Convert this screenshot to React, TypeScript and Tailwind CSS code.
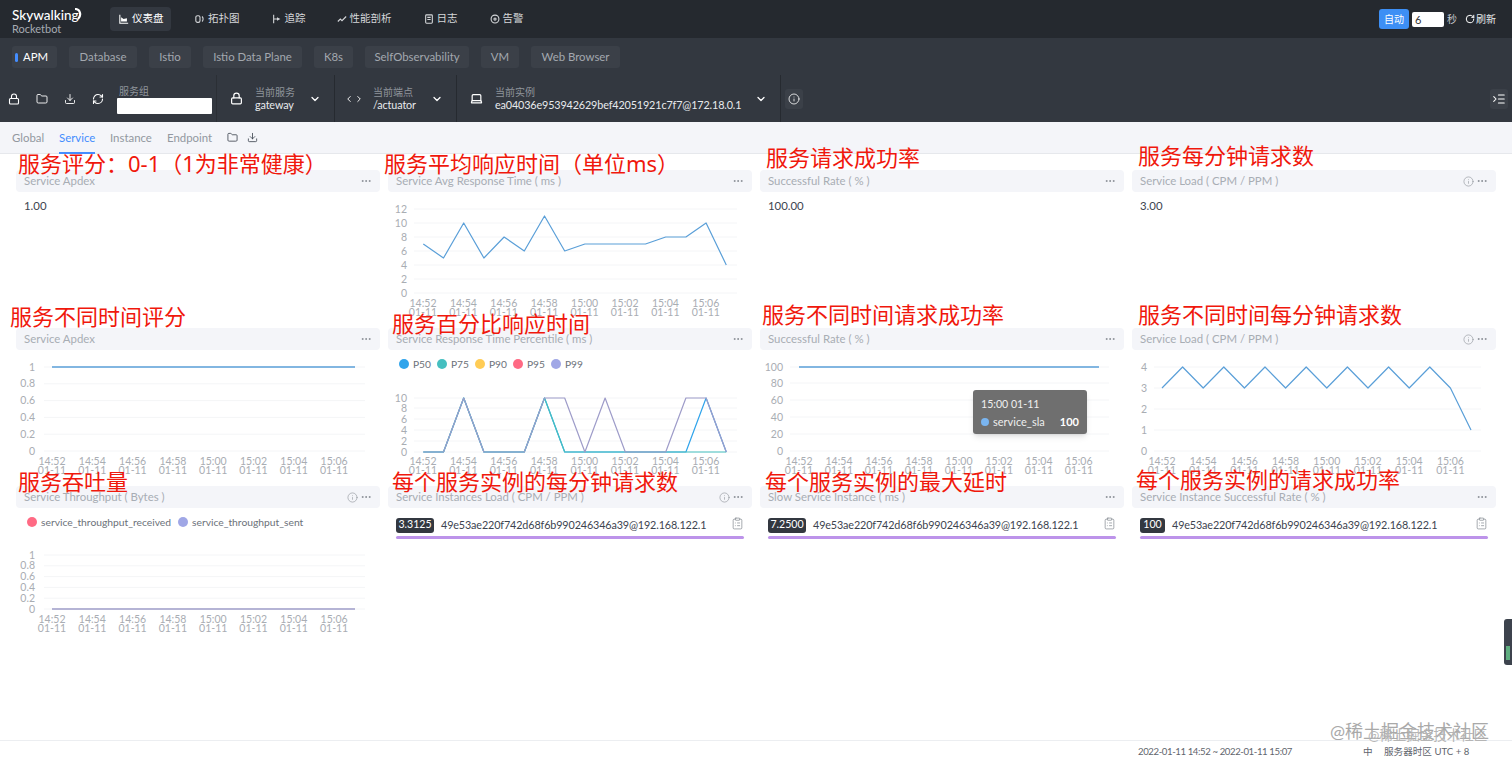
import React from "react";
import { Lock, Folder, Download, RefreshCw, ChevronDown, ChevronLeft, ChevronRight, Laptop, Info, Ellipsis, ClipboardList, IndentIncrease, RotateCw } from "lucide-react";

const BLUE = "#5a9fd8";
const TIMES = ["14:52", "14:54", "14:56", "14:58", "15:00", "15:02", "15:04", "15:06"];

type Series = { color: string; width?: number; pts: [number, number][] };
type ChartProps = {
  left: number; top: number; height?: number;
  yLabels: [string, number][];
  yRight: number; gridL: number; gridR: number;
  xStart: number; xStep: number; xY: number;
  series: Series[];
};

function Chart({ left, top, height = 128, yLabels, yRight, gridL, gridR, xStart, xStep, xY, series }: ChartProps) {
  return (
    <svg viewBox={`${left} ${top} 364 ${height}`} width={364} height={height} className="block">
      {yLabels.map(([t, y]) => (
        <g key={t}>
          <line x1={gridL} x2={gridR} y1={y} y2={y} stroke="#f4f5f7" />
          <text x={yRight} y={y + 3.5} fontSize={10.5} fill="#a9adb3" textAnchor="end">{t}</text>
        </g>
      ))}
      {TIMES.map((t, i) => (
        <g key={t} fontSize={10.5} fill="#a9adb3" textAnchor="middle">
          <text x={xStart + i * xStep} y={xY}>{t}</text>
          <text x={xStart + i * xStep} y={xY + 9}>01-11</text>
        </g>
      ))}
      {series.map((s, i) => (
        <polyline key={i} points={s.pts.map((p) => p.join(",")).join(" ")} fill="none" stroke={s.color} strokeWidth={s.width ?? 1.2} strokeLinejoin="round" />
      ))}
    </svg>
  );
}

function pts(x0: number, step: number, y0: number, unit: number, vals: number[]): [number, number][] {
  return vals.map((v, i) => [x0 + i * step, y0 - v * unit]);
}

function Card({ title, info, children }: { title: string; info?: boolean; children?: React.ReactNode }) {
  return (
    <div className="h-[150px] min-w-0">
      <div className="h-[22px] bg-[#f4f5f9] rounded-sm flex items-center pl-2 pr-2 text-[#a8adb4] text-[11.4px]">
        <span className="flex-1">{title}</span>
        {info && <Info size={11} strokeWidth={1.3} className="mr-[2px] text-[#8a8f96]" />}
        <Ellipsis size={12} className="text-[#8a8f96]" />
      </div>
      {children}
    </div>
  );
}

function Value({ v }: { v: string }) {
  return <div className="pl-2 pt-[6px] text-[11.4px] leading-[16px] text-[#3d444f]">{v}</div>;
}

function InstanceRow({ v, w }: { v: string; w: string }) {
  return (
    <div className="pl-2 pr-2 pt-[9px]">
      <div className="flex items-center h-[16px]">
        <span className={`${w} shrink-0 h-[15px] bg-[#333840] rounded-[3px] text-white text-[10.6px] flex items-center justify-center`}>{v}</span>
        <span className="flex-1 ml-[7px] text-[10.8px] tracking-[-0.13px] text-[#3d444f] whitespace-nowrap">49e53ae220f742d68f6b990246346a39@192.168.122.1</span>
        <ClipboardList size={13} strokeWidth={1.2} className="text-[#777d85] -mt-1 shrink-0" />
      </div>
      <div className="mt-[3px] h-[3px] rounded-sm bg-[#bd93ea]" />
    </div>
  );
}

function Sel({ icon, label, value, w }: { icon: React.ReactNode; label: string; value: string; w: string }) {
  return (
    <div className={`flex items-center h-[47px] ${w} border-r border-[#262a30] shrink-0`}>
      <div className="w-[38px] flex justify-center text-white">{icon}</div>
      <div className="flex-1 min-w-0 pt-[1px]">
        <div className="text-[10px] leading-[12px] text-[#8f949b]">{label}</div>
        <div className="text-[10.8px] tracking-[-0.13px] leading-[14px] text-[#e8eaed] whitespace-nowrap">{value}</div>
      </div>
      <ChevronDown size={12} strokeWidth={2.5} className="text-white mr-[13px]" />
    </div>
  );
}

function NavIcon({ kind }: { kind: number }) {
  const common = { width: 10, height: 10, viewBox: "0 0 12 12", fill: "none", stroke: "currentColor", strokeWidth: 1.3 };
  switch (kind) {
    case 0:
      return <svg {...common}><path d="M1 1v10h10" /><path d="M2.5 9V4l3 2 4-1v4z" fill="currentColor" stroke="none" /></svg>;
    case 1:
      return <svg {...common}><rect x="1" y="2" width="5" height="8" rx="2" /><path d="M8.5 3c1.6 1.6 1.6 4.4 0 6" /></svg>;
    case 2:
      return <svg {...common}><path d="M2 1v10M2 6h4" /><path d="M6 4l4 2-4 2z" fill="currentColor" stroke="none" /></svg>;
    case 3:
      return <svg {...common}><path d="M1 9l3-3 2 2 5-5" /></svg>;
    case 4:
      return <svg {...common}><rect x="2" y="1" width="8" height="10" rx="1" /><path d="M4 4h4M4 6.5h4" /></svg>;
    default:
      return <svg {...common}><circle cx="6" cy="6" r="4.7" /><circle cx="6" cy="6" r="1.3" /></svg>;
  }
}

const NAV: [string, string][] = [
  ["仪表盘", "w-[61px] pl-[9px]"],
  ["拓扑图", "ml-[24px]"],
  ["追踪", "ml-[32px]"],
  ["性能剖析", "ml-[31px]"],
  ["日志", "ml-[32px]"],
  ["告警", "ml-[32px]"],
];
const TABS: [string, string][] = [
  ["APM", "w-[45px] ml-3 mr-3"],
  ["Database", "w-[68px] mr-3"],
  ["Istio", "w-[42px] mr-3"],
  ["Istio Data Plane", "w-[99px] mr-3"],
  ["K8s", "w-[39px] mr-3"],
  ["SelfObservability", "w-[104px] mr-3"],
  ["VM", "w-[38px] mr-3"],
  ["Web Browser", "w-[89px]"],
];

const NOTES: [string, number, number][] = [
  ["服务评分：0-1（1为非常健康）", 18, 163],
  ["服务平均响应时间（单位ms）", 384, 163],
  ["服务请求成功率", 766, 157],
  ["服务每分钟请求数", 1138, 155],
  ["服务不同时间评分", 10, 316],
  ["服务百分比响应时间", 392, 323],
  ["服务不同时间请求成功率", 762, 314],
  ["服务不同时间每分钟请求数", 1138, 314],
  ["服务吞吐量", 18, 481],
  ["每个服务实例的每分钟请求数", 392, 481],
  ["每个服务实例的最大延时", 765, 481],
  ["每个服务实例的请求成功率", 1136, 479],
];

const yDec = (top: number, bottom: number): [string, number][] =>
  ["1", "0.8", "0.6", "0.4", "0.2", "0"].map((t, i) => [t, top + (i * (bottom - top)) / 5]);

export default function App() {
  return (
    <div className="relative h-[763px] w-[1512px] overflow-hidden flex flex-col bg-white font-['Lato','Noto_Sans_CJK_SC',sans-serif]">
      {/* top nav */}
      <div className="h-[38px] bg-[#25292f] flex items-center shrink-0">
        <div className="w-[110px] pl-3 pt-[5px] relative">
          <div className="text-[13.5px] leading-[14px] font-medium text-white">Skywalking</div>
          <div className="text-[11px] leading-[13px] text-[#a6abb2]">Rocketbot</div>
          <svg width="9" height="12" viewBox="0 0 9 12" className="absolute left-[74px] top-[5px]"><path d="M1 1c5 0 7 6 3 10" fill="none" stroke="#fff" strokeWidth="2.2" /></svg>
        </div>
        {NAV.map(([n, cls], i) => (
          <div key={n} className={`${cls} h-[24px] rounded-sm flex items-center gap-[3px] text-[10.5px] ${i === 0 ? "bg-[#333840] text-white" : "text-[#d5d7da]"}`}>
            <NavIcon kind={i} />
            <span>{n}</span>
          </div>
        ))}
        <div className="flex-1" />
        <div className="w-[30px] h-[20px] rounded-[3px] bg-[#3d8ff5] text-white text-[10px] flex items-center justify-center">自动</div>
        <div className="ml-[3px] w-[32px] h-[15px] rounded-[2px] bg-white text-[#333] text-[11px] leading-[15px] pl-[3px]">6</div>
        <span className="ml-[3px] text-[10px] text-[#c7cace]">秒</span>
        <RotateCw size={10} strokeWidth={2.4} className="ml-[8px] text-white" />
        <span className="ml-[1px] mr-[16px] text-[10px] text-[#e6e8ea]">刷新</span>
      </div>

      {/* template tabs */}
      <div className="h-[37px] bg-[#333840] flex items-center shrink-0">
        {TABS.map(([t, cls], i) => (
          <div key={t} className={`${cls} h-[22px] rounded-[3px] bg-[#3b4048] flex items-center justify-center text-[11.4px] ${i === 0 ? "text-white relative" : "text-[#a3a8af]"}`}>
            {i === 0 && <span className="absolute left-[3px] top-[7px] w-[3px] h-[9px] rounded-sm bg-[#448dfe]" />}
            <span className={i === 0 ? "pl-[2px]" : ""}>{t}</span>
          </div>
        ))}
      </div>

      {/* selector bar */}
      <div className="h-[47px] bg-[#333840] flex items-center shrink-0">
        <div className="flex items-center h-[47px] w-[217px] shrink-0 text-white border-r border-[#2b2f35]">
          <span className="w-[28px] flex justify-center"><Lock size={12} strokeWidth={2.2} /></span>
          <span className="w-[28px] flex justify-center"><Folder size={12} strokeWidth={1.8} /></span>
          <span className="w-[28px] flex justify-center"><Download size={12} strokeWidth={1.8} /></span>
          <span className="w-[28px] flex justify-center"><RefreshCw size={12} strokeWidth={2.2} /></span>
          <div className="ml-[5px] w-[95px] mt-[2px]">
            <div className="text-[10px] leading-[12px] text-[#8f949b] pl-[2px]">服务组</div>
            <div className="h-[16px] mt-[1px] bg-white rounded-[1px]" />
          </div>
        </div>
        <Sel icon={<Lock size={13} strokeWidth={2.2} />} label="当前服务" value="gateway" w="w-[118px]" />
        <Sel icon={<span className="flex"><ChevronLeft size={10} strokeWidth={2.2} /><ChevronRight size={10} strokeWidth={2.2} /></span>} label="当前端点" value="/actuator" w="w-[122px]" />
        <Sel icon={<Laptop size={13} strokeWidth={2.2} />} label="当前实例" value="ea04036e953942629bef42051921c7f7@172.18.0.1" w="w-[324px]" />
        <div className="ml-[4px] w-[18px] h-[20px] rounded-[3px] bg-[#3b4048] flex items-center justify-center text-white">
          <Info size={12} strokeWidth={1.6} />
        </div>
        <div className="flex-1" />
        <div className="mr-[4px] w-[18px] h-[20px] rounded-[3px] bg-[#3b4048] flex items-center justify-center text-white">
          <IndentIncrease size={14} strokeWidth={1.8} />
        </div>
      </div>

      {/* dashboard tabs */}
      <div className="h-[32px] bg-[#f4f5f9] border-b border-[#e6e8ec] flex items-center shrink-0 pl-3 text-[11.4px] text-[#9298a0] relative">
        <span className="w-[47px]">Global</span>
        <span className="w-[51px] text-[#448dfe] relative">Service<span className="absolute left-0 w-[36px] top-[23px] h-[2px] bg-[#448dfe]" /></span>
        <span className="w-[57px]">Instance</span>
        <span className="w-[60px]">Endpoint</span>
        <Folder size={11} strokeWidth={1.8} className="text-[#3d444f]" />
        <Download size={11} strokeWidth={1.8} className="ml-[9px] text-[#3d444f]" />
      </div>

      {/* grid */}
      <div className="flex-1 min-h-0 px-4 pt-4">
        <div className="grid grid-cols-4 gap-x-2 gap-y-2">
          <Card title="Service Apdex"><Value v="1.00" /></Card>
          <Card title="Service Avg Response Time ( ms )">
            <Chart left={388} top={192}
              yLabels={[["12", 209], ["10", 223], ["8", 237], ["6", 251], ["4", 265], ["2", 279], ["0", 293]]}
              yRight={407} gridL={414} gridR={737} xStart={423} xStep={40.4} xY={307}
              series={[{ color: BLUE, pts: pts(423.3, 20.2, 293, 7, [7, 5, 10, 5, 8, 6, 11, 6, 7, 7, 7, 7, 8, 8, 10, 4]) }]} />
          </Card>
          <Card title="Successful Rate ( % )"><Value v="100.00" /></Card>
          <Card title="Service Load ( CPM / PPM )" info><Value v="3.00" /></Card>

          <Card title="Service Apdex">
            <Chart left={16} top={350}
              yLabels={yDec(367, 451)} yRight={35} gridL={44} gridR={365} xStart={52} xStep={40.3} xY={465}
              series={[{ color: BLUE, width: 1.5, pts: [[52, 367], [355, 367]] }]} />
          </Card>
          <Card title="Service Response Time Percentile ( ms )">
            <div className="relative">
              <div className="absolute left-[11px] top-[8px] flex text-[10.2px] text-[#6b7179] leading-[12px]">
                {[["P50", "#30a4eb"], ["P75", "#45bfc0"], ["P90", "#ffcc55"], ["P95", "#ff6a84"], ["P99", "#a0a7e6"]].map(([t, c]) => (
                  <span key={t} className="flex items-center w-[38px]">
                    <span className="w-[10px] h-[10px] rounded-full mr-[4px]" style={{ background: c }} />{t}
                  </span>
                ))}
              </div>
              <Chart left={388} top={350}
                yLabels={[["10", 398], ["8", 408], ["6", 419], ["4", 430], ["2", 441], ["0", 452]]}
                yRight={407} gridL={414} gridR={737} xStart={423} xStep={40.4} xY={465}
                series={[
                  { color: "#30a4eb", pts: pts(423.3, 20.2, 452, 5.4, [0, 0, 10, 0, 0, 0, 10, 0, 0, 0, 0, 0, 0, 0, 10, 0]) },
                  { color: "#45bfc0", pts: pts(423.3, 20.2, 452, 5.4, [0, 0, 10, 0, 0, 0, 10, 0, 0, 0, 0, 0, 0, 0, 0, 0]) },
                  { color: "#9e9cc9", pts: pts(423.3, 20.2, 452, 5.4, [0, 0, 10, 0, 0, 0, 10, 10, 0, 10, 0, 0, 0, 10, 10, 0]) },
                ]} />
            </div>
          </Card>
          <Card title="Successful Rate ( % )">
            <div className="relative">
              <Chart left={760} top={350}
                yLabels={[["100", 367], ["80", 383], ["60", 400], ["40", 417], ["20", 434], ["0", 451]]}
                yRight={783} gridL={790} gridR={1109} xStart={799} xStep={40} xY={465}
                series={[{ color: BLUE, width: 1.5, pts: [[799, 367], [1099, 367]] }]} />
              <div className="absolute left-[213px] top-[40px] w-[114px] h-[44px] rounded-[3px] bg-[#6f6f6f] shadow-md text-white text-[11px] px-[8px] pt-[7px]">
                <div className="leading-[14px] text-[10.6px] text-[#f0f0f0]">15:00 01-11</div>
                <div className="flex items-center leading-[14px] mt-[4px]">
                  <span className="w-[8px] h-[8px] rounded-full bg-[#7ab5f0] mr-[4px]" />
                  <span className="flex-1 text-[#eeeeee]">service_sla</span>
                  <span className="font-bold">100</span>
                </div>
              </div>
            </div>
          </Card>
          <Card title="Service Load ( CPM / PPM )" info>
            <Chart left={1132} top={350}
              yLabels={[["4", 367], ["3", 388], ["2", 409], ["1", 430], ["0", 451]]}
              yRight={1147} gridL={1154} gridR={1481} xStart={1162} xStep={41.2} xY={465}
              series={[{ color: BLUE, pts: pts(1162, 20.6, 451, 21, [3, 4, 3, 4, 3, 4, 3, 4, 3, 4, 3, 4, 3, 4, 3, 1]) }]} />
          </Card>

          <Card title="Service Throughput ( Bytes )" info>
            <div className="relative">
              <div className="absolute left-[11px] top-[8px] flex items-center text-[10.3px] text-[#6b7179] leading-[12px]">
                <span className="w-[10px] h-[10px] rounded-full bg-[#ff6a84] mr-[4px]" />
                <span className="w-[137px]">service_throughput_received</span>
                <span className="w-[10px] h-[10px] rounded-full bg-[#a0a7e6] mr-[4px]" />
                <span>service_throughput_sent</span>
              </div>
              <Chart left={16} top={508} height={130}
                yLabels={yDec(555, 609)} yRight={35} gridL={44} gridR={365} xStart={52} xStep={40.3} xY={623}
                series={[{ color: "#9e9cc9", width: 1.5, pts: [[52, 609], [355, 609]] }]} />
            </div>
          </Card>
          <Card title="Service Instances Load ( CPM / PPM )" info><InstanceRow v="3.3125" w="w-[38px]" /></Card>
          <Card title="Slow Service Instance ( ms )"><InstanceRow v="7.2500" w="w-[38px]" /></Card>
          <Card title="Service Instance Successful Rate ( % )"><InstanceRow v="100" w="w-[25px]" /></Card>
        </div>
      </div>

      {/* footer */}
      <div className="h-[23px] border-t border-[#eceef1] flex items-center shrink-0 text-[9.6px] text-[#5f656d]">
        <span className="ml-[1138px] w-[225px] tracking-[-0.4px]">2022-01-11 14:52 ~ 2022-01-11 15:07</span>
        <span className="w-[21px]">中</span>
        <span>服务器时区 UTC + 8</span>
      </div>

      {/* red annotations drawn over the page */}
      {NOTES.map(([t, x, y]) => (
        <div key={t + x} className="absolute font-['Noto_Sans','Noto_Sans_CJK_SC',sans-serif] text-[22px] leading-[28px] text-[#f0180c] whitespace-nowrap" style={{ left: x, top: y - 14 }}>{t}</div>
      ))}

      {/* watermark */}
      <div className="absolute left-[1330px] top-[720px] text-[18px] leading-[22px] text-[#a9a9a9] whitespace-nowrap">@稀土掘金技术社区</div>
      <div className="absolute left-[1368px] top-[726px] text-[13.5px] leading-[18px] text-[#b5b5b5] whitespace-nowrap">@稀土掘金技术社区</div>

      {/* floating side handle */}
      <div className="absolute right-0 top-[619px] w-[8px] h-[46px] rounded-l-[3px] bg-[#3d434d] flex flex-col justify-end items-center pb-[5px]">
        <span className="w-[4px] h-[14px] bg-[#5fae80]" />
      </div>
    </div>
  );
}
